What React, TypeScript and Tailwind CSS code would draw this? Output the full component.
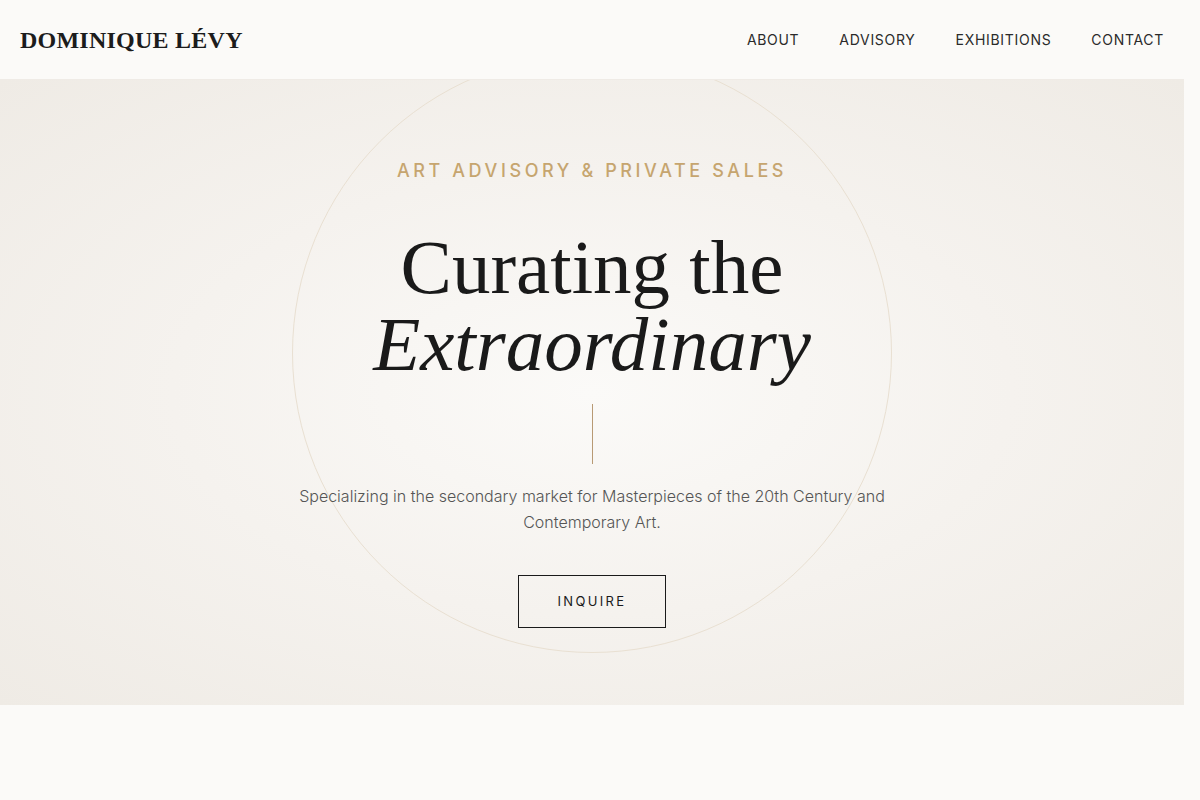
const serif = { fontFamily: '"Liberation Serif", "DejaVu Serif", serif' };

const NAV = ['About', 'Advisory', 'Exhibitions', 'Contact'];

export default function App() {
  return (
    <div className="min-h-[800px] bg-[#fbfaf8] font-['Inter',sans-serif] text-[#1a1a1a]">
      <div className="w-[1184px]">
        {/* Header */}
        <header className="flex h-20 items-center justify-between border-b border-[#efebe6] px-5">
          <h1 className="text-[24px] font-bold tracking-[0.01em] text-[#1c1c1c]" style={serif}>
            DOMINIQUE LÉVY
          </h1>
          <nav className="flex gap-10">
            {NAV.map((item) => (
              <a key={item} href="#" className="text-[14px] uppercase tracking-[0.05em] text-[#2a2a2a]">
                {item}
              </a>
            ))}
          </nav>
        </header>

        {/* Hero */}
        <section className="relative h-[625px] overflow-hidden bg-[radial-gradient(ellipse_at_center,#fbfaf8_0%,#f5f2ee_50%,#efebe5_100%)]">
          <div className="absolute left-[292px] top-[-27px] h-[600px] w-[600px] rounded-full border border-[#e9e0d2]" />
          <div className="relative flex flex-col items-center pt-[77px] text-center">
            <p className="text-[18px] font-medium uppercase tracking-[0.2em] text-[#c6a56f]">
              Art Advisory &amp; Private Sales
            </p>
            <h2 className="mt-[45px] text-[77px] leading-[77px] text-[#1a1a1a]" style={serif}>
              Curating the
              <br />
              <em>Extraordinary</em>
            </h2>
            <div className="mt-[21px] h-[60px] w-px bg-[#b89a74]" />
            <p className="mt-[19px] w-[600px] text-[16px] font-light leading-[26px] text-[#555]">
              Specializing in the secondary market for Masterpieces of the 20th Century and Contemporary Art.
            </p>
            <button className="mt-[40px] h-[53px] w-[148px] border border-[#1a1a1a] text-[13px] uppercase tracking-[0.18em] text-[#1a1a1a]">
              Inquire
            </button>
          </div>
        </section>
      </div>
    </div>
  );
}
